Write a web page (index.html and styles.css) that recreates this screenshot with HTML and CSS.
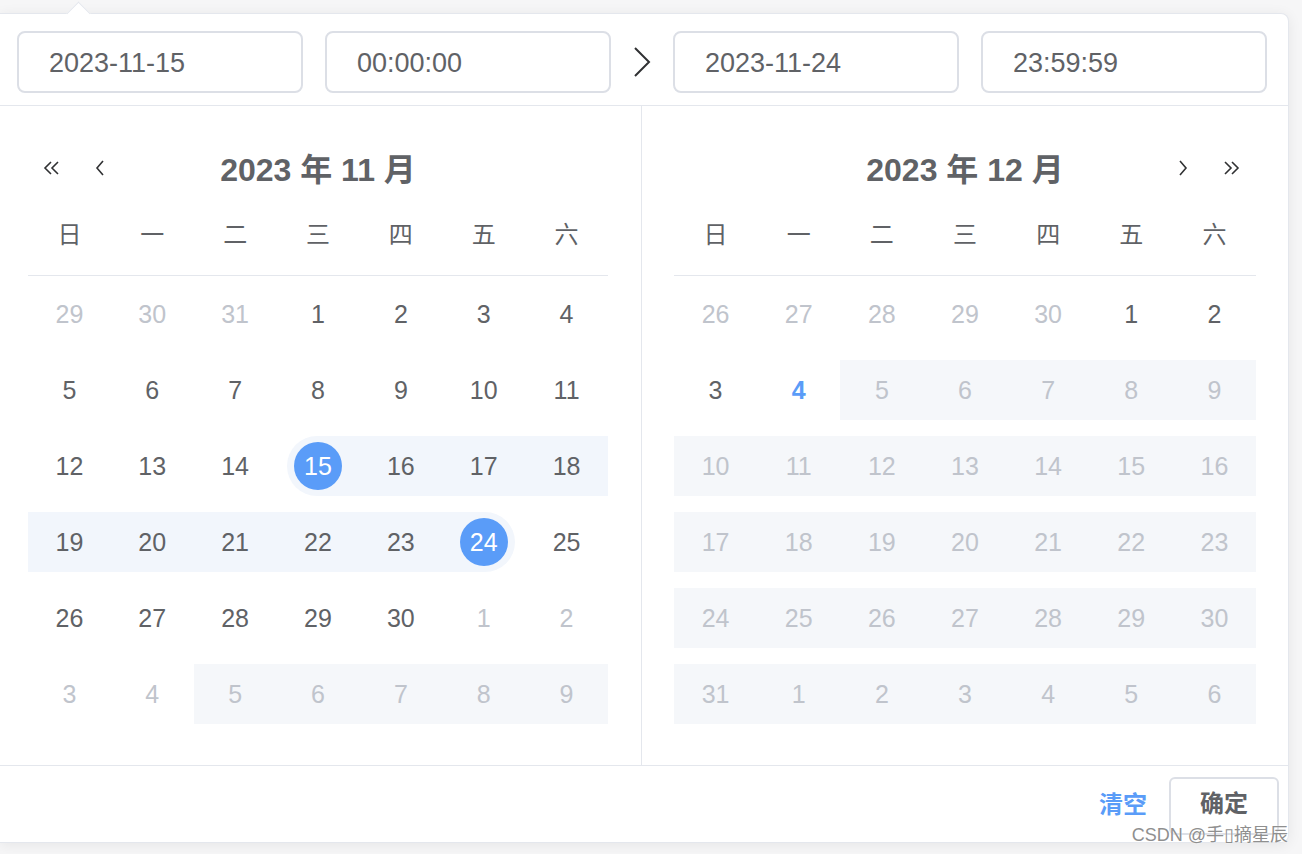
FILE: index.html
```html
<!DOCTYPE html>
<html lang="zh-CN">
<head>
<meta charset="utf-8">
<title>日期时间范围选择</title>
<link rel="stylesheet" href="styles.css">
</head>
<body>
<div class="panel">
  <span class="notch"></span>
  <div class="time-header">
    <div class="editor">2023-11-15</div>
    <div class="editor">00:00:00</div>
    <div class="sep">
      <svg width="18" height="32" viewBox="0 0 18 32"><path d="M2 2 L16 16 L2 30" fill="none" stroke="#303133" stroke-width="2"/></svg>
    </div>
    <div class="editor">2023-11-24</div>
    <div class="editor">23:59:59</div>
  </div>

  <div class="body">
    <div class="cal cal-left">
      <div class="cal-head">
        <div class="btns">
          <svg class="dbl" width="18" height="14" viewBox="0 0 18 14"><path d="M8 1 L2 7 L8 13 M15 1 L9 7 L15 13" fill="none" stroke="#303133" stroke-width="1.6"/></svg>
          <svg class="sgl" width="10" height="16" viewBox="0 0 10 16"><path d="M8 1 L2 8 L8 15" fill="none" stroke="#303133" stroke-width="1.6"/></svg>
        </div>
        <div class="title">2023 年 11 月</div>
        <div></div>
      </div>
      <div class="week"><span>日</span><span>一</span><span>二</span><span>三</span><span>四</span><span>五</span><span>六</span></div>
      <div class="days">
        <div class="d prev"><div>29</div></div>
        <div class="d prev"><div>30</div></div>
        <div class="d prev"><div>31</div></div>
        <div class="d"><div>1</div></div>
        <div class="d"><div>2</div></div>
        <div class="d"><div>3</div></div>
        <div class="d"><div>4</div></div>

        <div class="d"><div>5</div></div>
        <div class="d"><div>6</div></div>
        <div class="d"><div>7</div></div>
        <div class="d"><div>8</div></div>
        <div class="d"><div>9</div></div>
        <div class="d"><div>10</div></div>
        <div class="d"><div>11</div></div>

        <div class="d"><div>12</div></div>
        <div class="d"><div>13</div></div>
        <div class="d"><div>14</div></div>
        <div class="d range start"><div><span>15</span></div></div>
        <div class="d range"><div>16</div></div>
        <div class="d range"><div>17</div></div>
        <div class="d range"><div>18</div></div>

        <div class="d range"><div>19</div></div>
        <div class="d range"><div>20</div></div>
        <div class="d range"><div>21</div></div>
        <div class="d range"><div>22</div></div>
        <div class="d range"><div>23</div></div>
        <div class="d range end"><div><span>24</span></div></div>
        <div class="d"><div>25</div></div>

        <div class="d"><div>26</div></div>
        <div class="d"><div>27</div></div>
        <div class="d"><div>28</div></div>
        <div class="d"><div>29</div></div>
        <div class="d"><div>30</div></div>
        <div class="d prev"><div>1</div></div>
        <div class="d prev"><div>2</div></div>

        <div class="d prev"><div>3</div></div>
        <div class="d prev"><div>4</div></div>
        <div class="d dis"><div>5</div></div>
        <div class="d dis"><div>6</div></div>
        <div class="d dis"><div>7</div></div>
        <div class="d dis"><div>8</div></div>
        <div class="d dis"><div>9</div></div>
      </div>
    </div>

    <div class="cal cal-right">
      <div class="cal-head">
        <div></div>
        <div class="title">2023 年 12 月</div>
        <div class="btns btns-r">
          <svg class="sgl" width="10" height="16" viewBox="0 0 10 16"><path d="M2 1 L8 8 L2 15" fill="none" stroke="#303133" stroke-width="1.6"/></svg>
          <svg class="dbl" width="18" height="14" viewBox="0 0 18 14"><path d="M3 1 L9 7 L3 13 M10 1 L16 7 L10 13" fill="none" stroke="#303133" stroke-width="1.6"/></svg>
        </div>
      </div>
      <div class="week"><span>日</span><span>一</span><span>二</span><span>三</span><span>四</span><span>五</span><span>六</span></div>
      <div class="days">
        <div class="d prev"><div>26</div></div>
        <div class="d prev"><div>27</div></div>
        <div class="d prev"><div>28</div></div>
        <div class="d prev"><div>29</div></div>
        <div class="d prev"><div>30</div></div>
        <div class="d"><div>1</div></div>
        <div class="d"><div>2</div></div>

        <div class="d"><div>3</div></div>
        <div class="d today"><div>4</div></div>
        <div class="d dis"><div>5</div></div>
        <div class="d dis"><div>6</div></div>
        <div class="d dis"><div>7</div></div>
        <div class="d dis"><div>8</div></div>
        <div class="d dis"><div>9</div></div>

        <div class="d dis"><div>10</div></div>
        <div class="d dis"><div>11</div></div>
        <div class="d dis"><div>12</div></div>
        <div class="d dis"><div>13</div></div>
        <div class="d dis"><div>14</div></div>
        <div class="d dis"><div>15</div></div>
        <div class="d dis"><div>16</div></div>

        <div class="d dis"><div>17</div></div>
        <div class="d dis"><div>18</div></div>
        <div class="d dis"><div>19</div></div>
        <div class="d dis"><div>20</div></div>
        <div class="d dis"><div>21</div></div>
        <div class="d dis"><div>22</div></div>
        <div class="d dis"><div>23</div></div>

        <div class="d dis"><div>24</div></div>
        <div class="d dis"><div>25</div></div>
        <div class="d dis"><div>26</div></div>
        <div class="d dis"><div>27</div></div>
        <div class="d dis"><div>28</div></div>
        <div class="d dis"><div>29</div></div>
        <div class="d dis"><div>30</div></div>

        <div class="d dis"><div>31</div></div>
        <div class="d dis"><div>1</div></div>
        <div class="d dis"><div>2</div></div>
        <div class="d dis"><div>3</div></div>
        <div class="d dis"><div>4</div></div>
        <div class="d dis"><div>5</div></div>
        <div class="d dis"><div>6</div></div>
      </div>
    </div>
  </div>

  <div class="footer">
    <span class="link-btn">清空</span>
    <span class="btn">确定</span>
  </div>
</div>
<div class="watermark">CSDN @手▯摘星辰</div>
</body>
</html>
```

FILE: styles.css
```css
* { box-sizing: border-box; }
html, body { margin: 0; padding: 0; }
body {
  width: 1302px;
  height: 854px;
  overflow: hidden;
  background: #f6f6f7;
  font-family: "Liberation Sans", "Noto Sans CJK SC", sans-serif;
  color: #606266;
  position: relative;
}
.panel {
  position: relative;
  margin-top: 13px;
  width: 1289px;
  background: #fff;
  border: 1px solid #e4e7ed;
  border-left: none;
  border-radius: 0 8px 8px 0;
  box-shadow: 0 2px 14px rgba(0, 0, 0, 0.07);
}
.notch {
  position: absolute;
  top: -9px;
  left: 70px;
  width: 17px;
  height: 17px;
  background: #fff;
  border-top: 1px solid #e4e7ed;
  border-left: 1px solid #e4e7ed;
  transform: rotate(45deg);
}
.time-header {
  display: flex;
  align-items: center;
  padding: 17px 21px 12px 17px;
  border-bottom: 1px solid #e4e7ed;
}
.editor {
  width: 286px;
  height: 62px;
  border: 2px solid #dcdfe6;
  border-radius: 8px;
  padding-left: 30px;
  font-size: 27px;
  line-height: 60px;
  color: #606266;
}
.editor + .editor { margin-left: 22px; }
.sep {
  width: 62px;
  display: flex;
  justify-content: center;
  align-items: center;
  height: 62px;
  padding-right: 1px;
}
.body {
  display: flex;
  border-bottom: 1px solid #e4e7ed;
}
.cal { padding: 32px 32px 33px 32px; }
.cal-left {
  width: 642px;
  padding-left: 28px;
  padding-right: 33px;
  border-right: 1px solid #e4e7ed;
}
.cal-right { width: 646px; }
.cal-head {
  height: 60px;
  padding-bottom: 3px;
  display: grid;
  grid-template-columns: 1fr auto 1fr;
  align-items: center;
}
.title {
  font-size: 32px;
  font-weight: bold;
  color: #606266;
  text-align: center;
}
.btns {
  display: flex;
  align-items: center;
  padding-left: 15px;
  padding-top: 2px;
}
.btns .sgl { margin-left: 34px; }
.btns-r {
  justify-content: flex-end;
  padding-left: 0;
  padding-right: 16px;
}
.btns-r .sgl { margin-left: 0; margin-right: 34px; }
.week {
  display: grid;
  grid-template-columns: repeat(7, 1fr);
  height: 78px;
  padding-bottom: 8px;
  border-bottom: 1px solid #e4e7ed;
  align-items: center;
  font-size: 24px;
  text-align: center;
  color: #606266;
}
.days {
  display: grid;
  grid-template-columns: repeat(7, 1fr);
}
.d {
  padding: 8px 0;
  height: 76px;
  font-size: 25px;
  text-align: center;
}
.d > div {
  height: 60px;
  line-height: 60px;
}
.prev { color: #c0c4cc; }
.dis > div { background: #f5f7fa; color: #c0c4cc; }
.range > div { background: #f2f6fc; }
.start > div { margin-left: 10px; border-radius: 30px 0 0 30px; }
.end > div { margin-right: 10px; border-radius: 0 30px 30px 0; }
.start span, .end span {
  display: inline-block;
  width: 48px;
  height: 48px;
  line-height: 48px;
  border-radius: 50%;
  background: #5a9cf8;
  color: #fff;
  vertical-align: middle;
  margin-top: -4px;
}
.start span { margin-left: -10px; }
.end span { margin-right: -10px; }
.today { color: #5a9cf8; font-weight: bold; }
.footer {
  display: flex;
  justify-content: flex-end;
  align-items: center;
  padding: 11px 9px 7px 0;
}
.link-btn {
  font-size: 24px;
  font-weight: bold;
  color: #5a9cf8;
  margin-right: 22px;
  margin-bottom: 8px;
}
.btn {
  height: 58px;
  width: 110px;
  border: 2px solid #dcdfe6;
  border-radius: 6px;
  font-size: 24px;
  font-weight: bold;
  line-height: 50px;
  text-align: center;
  color: #606266;
  background: #fff;
}
.watermark {
  position: absolute;
  right: 14px;
  bottom: 8px;
  font-size: 18px;
  color: #8f8f8f;
  text-shadow: 0 0 2px #fff;
  font-family: "Liberation Sans", "DejaVu Sans", "Noto Sans CJK SC", sans-serif;
}
```
